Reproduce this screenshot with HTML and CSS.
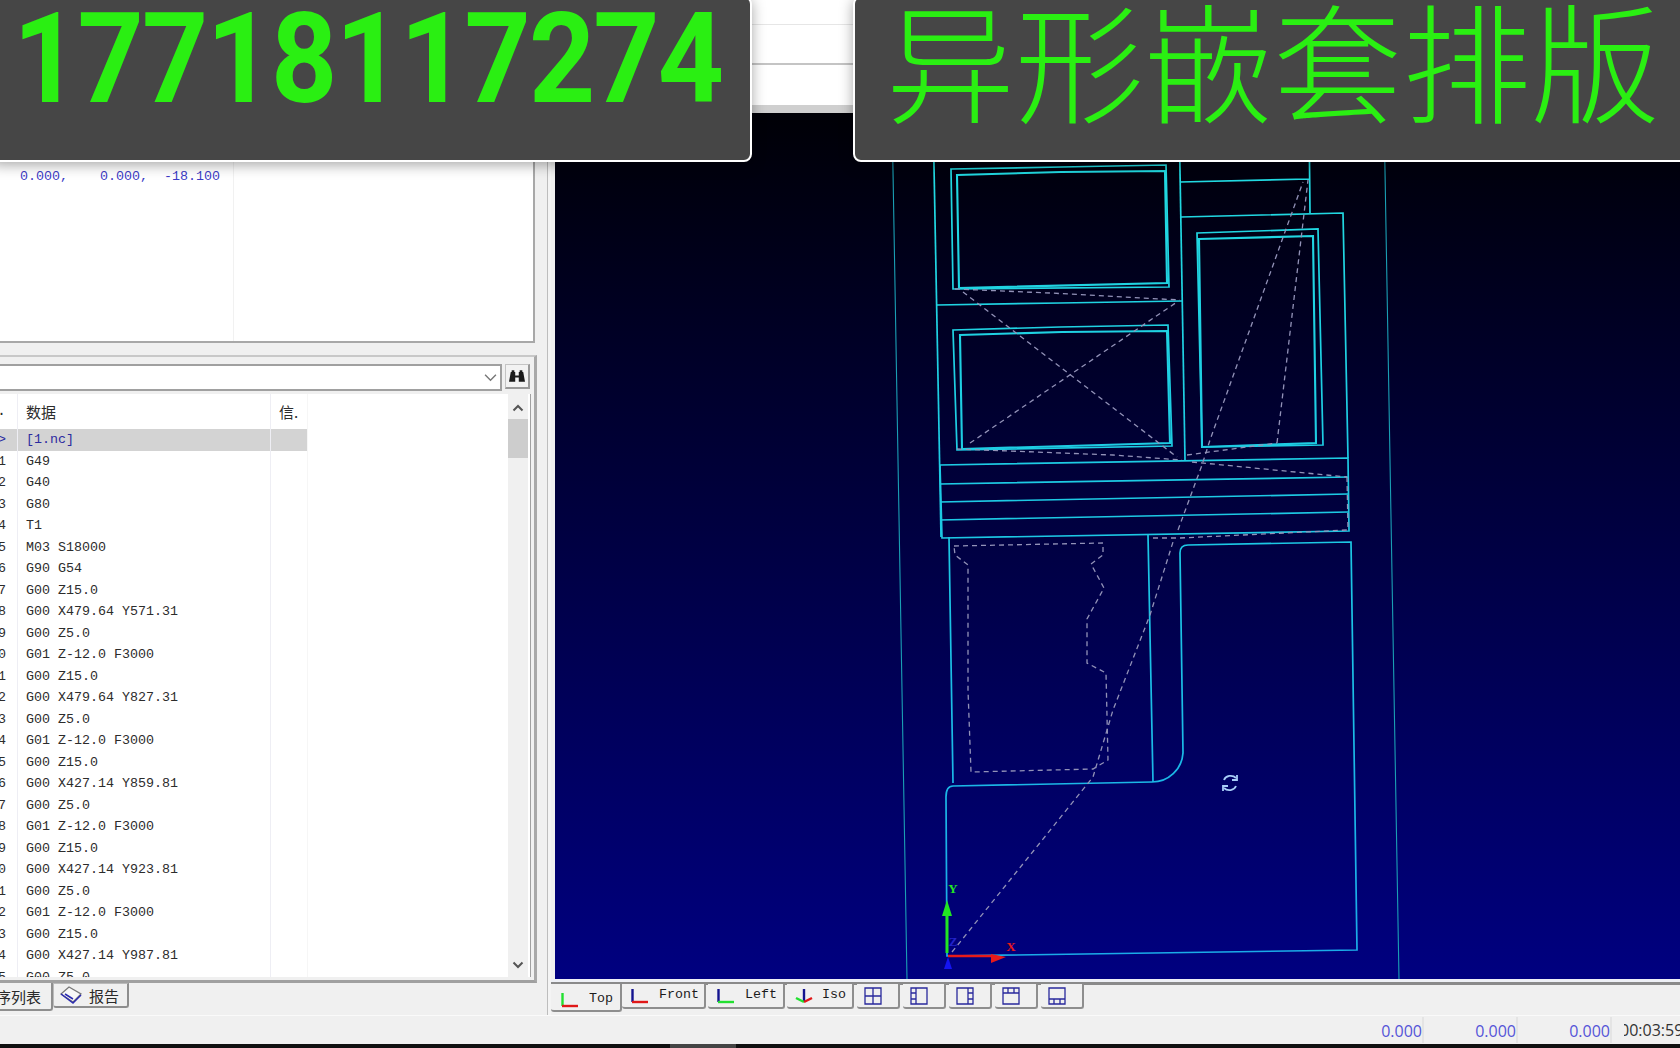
FILE: index.html
```html
<!DOCTYPE html>
<html lang="zh">
<head>
<meta charset="utf-8">
<title>异形嵌套排版</title>
<link rel="stylesheet" href="styles.css">
</head>
<body>
<div class="app">
  <header class="toolbar">
    <div class="tb-row tb-a"></div>
    <div class="tb-row tb-b"></div>
    <div class="tb-row tb-c"></div>
  </header>

  <main class="main">
    <aside class="side">
      <section class="panel-top">
        <pre class="coords">0.000,    0.000,  -18.100</pre>
      </section>

      <section class="panel-list">
        <div class="search">
          <div class="combo">
            <svg class="chev" viewBox="0 0 12 8"><path d="M1 1.5 6 6.5 11 1.5"/></svg>
          </div>
          <button class="find" aria-label="查找">
            <svg viewBox="0 0 18 16"><path d="M2 3h5v4h4V3h5l2 11h-7V9H7v5H0z"/><rect x="3" y="1" width="3" height="3"/><rect x="12" y="1" width="3" height="3"/></svg>
          </button>
        </div>
        <div class="list">
          <div class="table">
            <div class="row head"><span class="c-n">.</span><span class="c-d">数据</span><span class="c-i">信.</span></div>
            <div class="row sel"><span class="c-n">&gt;</span><span class="c-d">[1.nc]</span><span class="c-i"></span></div>
            <div class="row"><span class="c-n">1</span><span class="c-d">G49</span><span class="c-i"></span></div>
            <div class="row"><span class="c-n">2</span><span class="c-d">G40</span><span class="c-i"></span></div>
            <div class="row"><span class="c-n">3</span><span class="c-d">G80</span><span class="c-i"></span></div>
            <div class="row"><span class="c-n">4</span><span class="c-d">T1</span><span class="c-i"></span></div>
            <div class="row"><span class="c-n">5</span><span class="c-d">M03 S18000</span><span class="c-i"></span></div>
            <div class="row"><span class="c-n">6</span><span class="c-d">G90 G54</span><span class="c-i"></span></div>
            <div class="row"><span class="c-n">7</span><span class="c-d">G00 Z15.0</span><span class="c-i"></span></div>
            <div class="row"><span class="c-n">8</span><span class="c-d">G00 X479.64 Y571.31</span><span class="c-i"></span></div>
            <div class="row"><span class="c-n">9</span><span class="c-d">G00 Z5.0</span><span class="c-i"></span></div>
            <div class="row"><span class="c-n">10</span><span class="c-d">G01 Z-12.0 F3000</span><span class="c-i"></span></div>
            <div class="row"><span class="c-n">11</span><span class="c-d">G00 Z15.0</span><span class="c-i"></span></div>
            <div class="row"><span class="c-n">12</span><span class="c-d">G00 X479.64 Y827.31</span><span class="c-i"></span></div>
            <div class="row"><span class="c-n">13</span><span class="c-d">G00 Z5.0</span><span class="c-i"></span></div>
            <div class="row"><span class="c-n">14</span><span class="c-d">G01 Z-12.0 F3000</span><span class="c-i"></span></div>
            <div class="row"><span class="c-n">15</span><span class="c-d">G00 Z15.0</span><span class="c-i"></span></div>
            <div class="row"><span class="c-n">16</span><span class="c-d">G00 X427.14 Y859.81</span><span class="c-i"></span></div>
            <div class="row"><span class="c-n">17</span><span class="c-d">G00 Z5.0</span><span class="c-i"></span></div>
            <div class="row"><span class="c-n">18</span><span class="c-d">G01 Z-12.0 F3000</span><span class="c-i"></span></div>
            <div class="row"><span class="c-n">19</span><span class="c-d">G00 Z15.0</span><span class="c-i"></span></div>
            <div class="row"><span class="c-n">20</span><span class="c-d">G00 X427.14 Y923.81</span><span class="c-i"></span></div>
            <div class="row"><span class="c-n">21</span><span class="c-d">G00 Z5.0</span><span class="c-i"></span></div>
            <div class="row"><span class="c-n">22</span><span class="c-d">G01 Z-12.0 F3000</span><span class="c-i"></span></div>
            <div class="row"><span class="c-n">23</span><span class="c-d">G00 Z15.0</span><span class="c-i"></span></div>
            <div class="row"><span class="c-n">24</span><span class="c-d">G00 X427.14 Y987.81</span><span class="c-i"></span></div>
            <div class="row"><span class="c-n">25</span><span class="c-d">G00 Z5.0</span><span class="c-i"></span></div>
          </div>
          <div class="scroll">
            <svg class="sb-arrow" viewBox="0 0 12 8"><path d="M1.500 6.500 6 2l4.500 4.500"/></svg>
            <div class="thumb"></div>
            <div class="track"></div>
            <svg class="sb-arrow sb-down" viewBox="0 0 12 8"><path d="M1.500 1.500 6 6l4.500-4.500"/></svg>
          </div>
        </div>
      </section>

      <nav class="side-tabs">
        <div class="stab active"><span>工序列表</span></div>
        <div class="stab report">
          <svg viewBox="0 0 22 18"><path class="bk-a" d="M1 8 9 1l12 7-8 8z"/><path class="bk-b" d="M1 8l12 9 8-8M5 8l8 5"/></svg>
          <span>报告</span>
        </div>
      </nav>
    </aside>

    <section class="view">
      <svg class="cad" viewBox="555 113 1125 866">
        <defs>
          <linearGradient id="cadg" gradientUnits="userSpaceOnUse" x1="0" y1="113" x2="0" y2="979">
            <stop offset="0" stop-color="#22dce0"/>
            <stop offset="0.5" stop-color="#1cc8e4"/>
            <stop offset="1" stop-color="#1aaae8"/>
          </linearGradient>
        </defs>
        <g class="guides" fill="none" stroke="#1a9fb4">
          <path d="M892 113 907 979M1384 113 1399 979"/>
        </g>
        <g class="shapes" fill="none" stroke="url(#cadg)">
          <path d="M933 113 941 537"/>
          <path d="M951 169 1061 167 1166 165 1169 287 953 289Z"/>
          <path class="heavy" d="M957 175 1061 172 1165 171 1167 283 959 288Z"/>
          <path d="M937 305 1060 303 1182 301"/>
          <path d="M1179 113 1185 460"/>
          <path d="M1180 182 1309 179M1309 113 1310 213"/>
          <path d="M1181 217 1343 213 1348 458"/>
          <path d="M953 330 1060 327 1168 325 1172 446 957 450Z"/>
          <path class="heavy" d="M960 335 1062 332 1167 331 1170 443 962 449Z"/>
          <path d="M1197 233 1318 229 1323 445 1202 447Z"/>
          <path class="heavy" d="M1199 239 1313 236 1316 443 1202 447Z"/>
          <path d="M940 465 1348 458 1349 531 942 538Z"/>
          <path d="M940 484 1348 477M940 502 1348 494M940 520 1348 512"/>
          <path d="M949 537 953 783M1148 535 1153 782"/>
          <path d="M946 797Q946 786 953 786L1152 782A31 31 0 0 0 1183 753L1180 553Q1180 545 1188 545L1351 542 1357 950 947 956Z"/>
        </g>
        <g class="rapid" fill="none" stroke="#9292b8" stroke-dasharray="5 4">
          <path d="M954 546 1103 543 1103 555 1091 564 1104 588 1087 619 1087 663 1106 673 1108 760 1093 769 971 772 968 690 968 565 955 555Z"/>
          <path d="M952 952 1093 777 1113 710 1150 615 1173 542"/>
          <path d="M1178 530 1202 465 1210 440 1303 182"/>
          <path d="M1277 443 1308 180"/>
          <path d="M963 292 1177 457"/>
          <path d="M970 443 1177 302"/>
          <path d="M955 289 1050 293 1180 300"/>
          <path d="M957 449 1113 455 1182 460"/>
          <path d="M1187 455 1277 443"/>
          <path d="M1192 462 1347 477"/>
          <path d="M1347 477 1348 530"/>
          <path d="M1153 538 1177 538"/>
          <path d="M1180 538 1347 530"/>
        </g>
        <g class="axes">
          <path class="ax-g" d="M947 953V915"/>
          <path class="fill-g" d="M942 916H952L947 900Z"/>
          <path class="ax-r" d="M948 956H992"/>
          <path class="fill-r" d="M991 954 1006 957 991 963Z"/>
          <path class="fill-b" d="M944 969H952L948 957Z"/>
          <text class="ax-t t-g" x="953" y="893">Y</text>
          <text class="ax-t t-b" x="953" y="946">Z</text>
          <text class="ax-t t-r" x="1011" y="951">X</text>
        </g>
        <g class="rotate" fill="none">
          <path d="M1224 780A7 6 0 0 1 1236 778M1236 786A7 6 0 0 1 1224 788"/>
          <path class="rot-a" d="M1237 775V780H1232M1223 791V786H1228"/>
        </g>
      </svg>

      <nav class="view-tabs">
        <div class="vtab active vt-top">
          <svg viewBox="0 0 18 16"><path class="i-g" d="M1.500 1v13"/><path class="i-r" d="M1 14h16"/></svg>
          <span>Top</span>
        </div>
        <div class="vtab vt-front">
          <svg viewBox="0 0 18 16"><path class="i-b" d="M1.500 1v13"/><path class="i-r" d="M1 14h16"/></svg>
          <span>Front</span>
        </div>
        <div class="vtab vt-left">
          <svg viewBox="0 0 18 16"><path class="i-b" d="M1.500 1v13"/><path class="i-g" d="M1 14h16"/></svg>
          <span>Left</span>
        </div>
        <div class="vtab vt-iso">
          <svg viewBox="0 0 20 16"><path class="i-b" d="M10 1v13"/><path class="i-g" d="M10 14 2 10"/><path class="i-r" d="M10 14l8-4"/></svg>
          <span>Iso</span>
        </div>
        <div class="vtab lay">
          <svg viewBox="0 0 18 18"><path d="M1 1h16v16H1zM9 1v16M1 9h16"/></svg>
        </div>
        <div class="vtab lay">
          <svg viewBox="0 0 18 18"><path d="M1 1h16v16H1zM6 1v16M1 6h5M1 12h5"/></svg>
        </div>
        <div class="vtab lay">
          <svg viewBox="0 0 18 18"><path d="M1 1h16v16H1zM12 1v16M12 6h5M12 12h5"/></svg>
        </div>
        <div class="vtab lay">
          <svg viewBox="0 0 18 18"><path d="M1 1h16v16H1zM1 6h16M6 1v5M12 1v5"/></svg>
        </div>
        <div class="vtab lay">
          <svg viewBox="0 0 18 18"><path d="M1 1h16v16H1zM1 12h16M6 12v5M12 12v5"/></svg>
        </div>
      </nav>
    </section>
  </main>

  <footer class="status">
    <div class="st-cell st-1">0.000</div>
    <div class="st-cell st-2">0.000</div>
    <div class="st-cell st-3">0.000</div>
    <div class="st-time"><span>00:03:59</span></div>
  </footer>
  <div class="taskbar"><div class="task-item"></div></div>

  <div class="caption cap-phone"><span>17718117274</span></div>
  <div class="caption cap-title"><span>异形嵌套排版</span></div>
</div>
</body>
</html>
```

FILE: styles.css
```css
* { box-sizing: border-box; }
html, body { margin: 0; padding: 0; background: #f0f0f0; }
pre { margin: 0; }

.app {
  position: relative;
  width: 1680px;
  height: 1048px;
  overflow: hidden;
  display: flex;
  flex-direction: column;
  background: #f0f0f0;
  font-family: "Liberation Mono", "Noto Sans CJK SC", monospace;
  font-size: 13.33px;
  color: #2c2c2c;
}

/* top toolbar band, mostly covered by captions */
.toolbar {
  height: 113px;
  flex: none;
  display: flex;
  flex-direction: column;
  background: #fff;
}
.tb-row { background: #fff; }
.tb-a { height: 25px; border-bottom: 1px solid #e6e6e6; }
.tb-b { height: 40px; border-bottom: 2px solid #c4c4c4; }
.tb-c { height: 48px; border-bottom: 8px solid #cfcfcf; }

.main { flex: none; height: 902px; display: flex; }

/* left side */
.side {
  width: 559px;
  margin-left: -8px;
  flex: none;
  display: flex;
  flex-direction: column;
  background: linear-gradient(90deg, #f0f0f0 555px, #bdbdbd 555px, #bdbdbd 556px, #f4f4f4 556px);
}
.panel-top {
  height: 230px;
  width: 543px;
  flex: none;
  background: #fff;
  border-right: 2px solid #a8a8a8;
  border-bottom: 2px solid #a8a8a8;
  position: relative;
  background-image: linear-gradient(#f1f1f1, #f1f1f1);
  background-size: 1px 100%;
  background-position: 241px 0;
  background-repeat: no-repeat;
}
.coords {
  padding: 56px 0 0 28px;
  font-family: "Liberation Mono", monospace;
  font-size: 13.33px;
  line-height: 16px;
  color: #3b3bc6;
}
.panel-list {
  margin-top: 12px;
  height: 628px;
  width: 545px;
  flex: none;
  border-top: 2px solid #c8c8c8;
  border-right: 3px solid #a8a8a8;
  border-bottom: 3px solid #a0a0a0;
  padding-top: 7px;
  padding-right: 3px;
  display: flex;
  flex-direction: column;
}
.search { height: 30px; flex: none; display: flex; gap: 3px; }
.combo {
  width: 510px;
  height: 27px;
  background: #fff;
  border: 2px solid #a0a0a0;
  border-left: none;
  display: flex;
  align-items: center;
  justify-content: flex-end;
  padding-right: 3px;
}
.chev { width: 13px; height: 9px; fill: none; stroke: #777; stroke-width: 1.3; }
.find {
  width: 25px;
  height: 25px;
  padding: 0;
  background: #f2f2f2;
  border: 1px solid #c4c4c4;
  border-right: 2px solid #999;
  border-bottom: 2px solid #999;
  display: flex;
  align-items: center;
  justify-content: center;
}
.find svg { width: 16px; height: 15px; fill: #1a1a1a; }

.list {
  height: 583px;
  flex: none;
  display: flex;
  background: #fff;
  border-right: 1px solid #a0a0a0;
  overflow: hidden;
}
.table { width: 516px; flex: none; overflow: hidden; }
.row {
  display: grid;
  grid-template-columns: 26px 253px 37px;
  height: 21.5px;
  line-height: 21.5px;
  white-space: pre;
}
.row span { overflow: hidden; }
.row .c-n { display: flex; justify-content: flex-end; padding-right: 11px; border-right: 1px solid #eeeef4; }
.c-d { padding-left: 8px; border-right: 1px solid #eeeef4; }
.c-i { border-right: 1px solid #f6f6f6; }
.head {
  height: 35px;
  line-height: 36px;
  font-family: "Noto Sans CJK SC", sans-serif;
  font-size: 15px;
}
.head .c-n { font-family: "Liberation Mono", monospace; }
.head .c-i { padding-left: 8px; }
.sel { background: linear-gradient(90deg, #d3d3d3 316px, #fff 316px); color: #2b2ba0; }
.scroll {
  width: 20px;
  flex: none;
  display: flex;
  flex-direction: column;
  align-items: center;
  background: #f0f0f0;
}
.sb-arrow { width: 12px; height: 8px; margin: 10px 0 7px; fill: none; stroke: #555; stroke-width: 2; flex: none; }
.thumb { width: 20px; height: 39px; background: #cdcdcd; flex: none; }
.track { height: 503px; flex: none; }
.sb-down { margin: 0; }

.side-tabs { display: flex; justify-content: flex-start; height: 29px; flex: none; margin-top: 0; }
.stab {
  height: 25px;
  display: flex;
  align-items: center;
  font-family: "Noto Sans CJK SC", sans-serif;
  font-size: 15px;
  color: #2a2a2a;
  background: #f0f0f0;
  border-right: 2px solid #8e8e8e;
  border-bottom: 2px solid #8e8e8e;
  border-radius: 0 0 3px 3px;
}
.stab.active {
  width: 63px;
  height: 28px;
  margin-left: -2px;
  justify-content: flex-end;
  padding-right: 10px;
  white-space: nowrap;
  overflow: hidden;
}
.stab.active span { flex: none; }
.stab.report { width: 76px; padding-left: 6px; gap: 7px; border-left: 1px solid #bbb; border-top: 1px solid #bbb; }
.stab.report svg { width: 22px; height: 18px; flex: none; }
.bk-a { fill: #f8f8f8; stroke: #777; stroke-width: 1.2; }
.bk-b { fill: none; stroke: #2c2cb0; stroke-width: 1.5; }

/* viewport */
.view { flex: 1; min-width: 0; display: flex; flex-direction: column; }
.cad {
  display: block;
  margin-left: 4px;
  width: 1125px;
  height: 866px;
  flex: none;
  background: linear-gradient(#000006, #000080);
}
.guides path { stroke-width: 1.1; }
.shapes path { stroke-width: 1.7; }
.shapes .heavy { stroke-width: 2.1; }
.rapid path { stroke-width: 1.3; }
.ax-g { stroke: #22e622; stroke-width: 3; fill: none; }
.ax-r { stroke: #e81a1a; stroke-width: 2.5; fill: none; }
.fill-g { fill: #22e622; }
.fill-r { fill: #e81a1a; }
.fill-b { fill: #1414f0; }
.ax-t { font-family: "Liberation Serif", serif; font-size: 13px; font-weight: 700; text-anchor: middle; }
.t-g { fill: #22e622; }
.t-r { fill: #e81a1a; }
.t-b { fill: #2222c8; }
.rotate path { stroke: #a8cdf8; stroke-width: 1.8; fill: none; }

.view-tabs {
  height: 36px;
  flex: none;
  display: flex;
  gap: 3px;
  padding-top: 5px;
  background: linear-gradient(#eef0f6 3px, #8a8a8a 3px, #8a8a8a 6px, #f0f0f0 6px);
}
.vtab {
  height: 25px;
  flex: none;
  position: relative;
  display: flex;
  align-items: center;
  background: #f0f0f0;
  border-right: 2px solid #8e8e8e;
  border-bottom: 2px solid #8e8e8e;
  border-radius: 0 0 3px 3px;
  color: #1c1c1c;
}
.vtab svg { flex: none; fill: none; stroke-width: 2.4; }
.vtab span { white-space: pre; }
.vt-top { width: 71px; height: 28px; padding-left: 10px; gap: 10px; margin-right: -3px; }
.vt-top svg { margin-top: 6px; }
.vt-top span { margin-top: 3px; }
.vt-front { width: 84px; padding-left: 9px; gap: 10px; }
.vt-front span { margin-top: -2px; }
.vt-left { width: 77px; padding-left: 9px; gap: 10px; margin-left: -1px; }
.vt-left span { margin-top: -2px; }
.vt-iso { width: 67px; padding-left: 7px; gap: 8px; margin-left: -1px; }
.vt-iso span { margin-top: -2px; }
.vt-front svg, .vt-left svg { width: 18px; height: 16px; }
.vt-top svg { width: 18px; height: 16px; }
.vt-iso svg { width: 20px; height: 16px; }
.i-r { stroke: #e01818; }
.i-g { stroke: #22e030; }
.i-b { stroke: #141490; }
.lay { width: 43px; padding-left: 7px; }
.lay svg { width: 18px; height: 18px; stroke: #28289c; stroke-width: 1.3; }

/* status */
.status {
  height: 29px;
  flex: none;
  display: flex;
  border-top: 1px solid #fafafa;
  font-family: "Open Sans", sans-serif;
  font-size: 16px;
  line-height: 29px;
  color: #5454d8;
}
.st-cell { text-align: right; border-right: 2px solid #e4e4e4; height: 26px; margin-top: 1px; line-height: 28px; }
.st-1 { width: 1424px; }
.st-2 { width: 94px; }
.st-3 { width: 94px; }
.st-time { margin-left: 12px; flex: 1; overflow: hidden; color: #333; }
.st-time span { display: block; margin-left: -4px; white-space: nowrap; }
.taskbar { height: 4px; flex: none; background: #101010; }
.task-item { width: 66px; height: 4px; margin-left: 670px; background: #444; }

/* video captions on top */
.caption {
  position: absolute;
  top: -4px;
  height: 166px;
  background: #464646;
  border: 2px solid #fff;
  border-radius: 8px;
  box-shadow: 0 3px 14px rgba(0, 0, 0, .35);
  color: #2aef12;
  white-space: nowrap;
  overflow: hidden;
}
.caption span { display: inline-block; }
.cap-phone {
  left: -10px;
  width: 762px;
  font-family: Roboto, "Liberation Sans", sans-serif;
  font-weight: 700;
  font-size: 127px;
  letter-spacing: -2px;
  line-height: 122px;
  padding-left: 21px;
}
.cap-phone span { transform: scaleX(.91); transform-origin: 0 50%; }
.cap-title {
  left: 853px;
  width: 840px;
  font-family: "Noto Sans CJK SC", sans-serif;
  font-weight: 300;
  font-size: 129px;
  line-height: 120px;
  padding-left: 31px;
}
```
